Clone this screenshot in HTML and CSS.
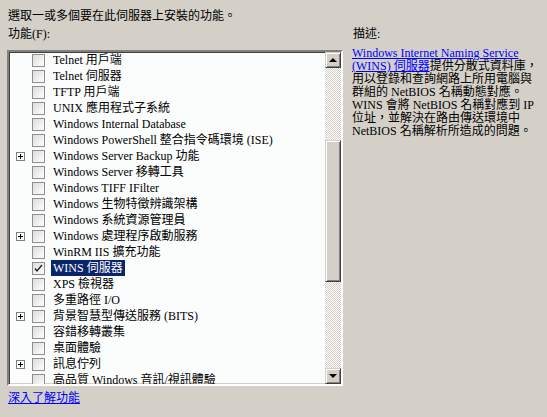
FILE: index.html
```html
<!DOCTYPE html>
<html lang="zh-Hant">
<head>
  <meta charset="UTF-8" />
  <title>新增功能</title>
  <link rel="stylesheet" href="styles.css">
</head>
<body>
  <p class="intro">選取一或多個要在此伺服器上安裝的功能。</p>

  <div class="columns">
    <div class="features">
      <div class="label">功能(F):</div>

      <div class="listbox">
        <ul class="items">
          <li class="row"><span class="exp none"></span><span class="box"></span><span class="name">Telnet 用戶端</span></li>
          <li class="row"><span class="exp none"></span><span class="box"></span><span class="name">Telnet 伺服器</span></li>
          <li class="row"><span class="exp none"></span><span class="box"></span><span class="name">TFTP 用戶端</span></li>
          <li class="row"><span class="exp none"></span><span class="box"></span><span class="name">UNIX 應用程式子系統</span></li>
          <li class="row"><span class="exp none"></span><span class="box"></span><span class="name">Windows Internal Database</span></li>
          <li class="row"><span class="exp none"></span><span class="box"></span><span class="name">Windows PowerShell 整合指令碼環境 (ISE)</span></li>
          <li class="row"><span class="exp"></span><span class="box"></span><span class="name">Windows Server Backup 功能</span></li>
          <li class="row"><span class="exp none"></span><span class="box"></span><span class="name">Windows Server 移轉工具</span></li>
          <li class="row"><span class="exp none"></span><span class="box"></span><span class="name">Windows TIFF IFilter</span></li>
          <li class="row"><span class="exp none"></span><span class="box"></span><span class="name">Windows 生物特徵辨識架構</span></li>
          <li class="row"><span class="exp none"></span><span class="box"></span><span class="name">Windows 系統資源管理員</span></li>
          <li class="row"><span class="exp"></span><span class="box"></span><span class="name">Windows 處理程序啟動服務</span></li>
          <li class="row"><span class="exp none"></span><span class="box"></span><span class="name">WinRM IIS 擴充功能</span></li>
          <li class="row"><span class="exp none"></span><span class="box checked"></span><span class="name selected">WINS 伺服器</span></li>
          <li class="row"><span class="exp none"></span><span class="box"></span><span class="name">XPS 檢視器</span></li>
          <li class="row"><span class="exp none"></span><span class="box"></span><span class="name">多重路徑 I/O</span></li>
          <li class="row"><span class="exp"></span><span class="box"></span><span class="name">背景智慧型傳送服務 (BITS)</span></li>
          <li class="row"><span class="exp none"></span><span class="box"></span><span class="name">容錯移轉叢集</span></li>
          <li class="row"><span class="exp none"></span><span class="box"></span><span class="name">桌面體驗</span></li>
          <li class="row"><span class="exp"></span><span class="box"></span><span class="name">訊息佇列</span></li>
          <li class="row"><span class="exp none"></span><span class="box"></span><span class="name">高品質 Windows 音訊/視訊體驗</span></li>
        </ul>

        <div class="scrollbar">
          <div class="btn up"></div>
          <div class="track">
            <div class="thumb"></div>
          </div>
          <div class="btn down"></div>
        </div>
      </div>

      <a class="more" href="#">深入了解功能</a>
    </div>

    <div class="desc">
      <div class="label">描述:</div>
      <p class="text"><a href="#">Windows Internet Naming Service<br>(WINS) 伺服器</a>提供分散式資料庫，<br>用以登錄和查詢網路上所用電腦與<br>群組的 NetBIOS 名稱動態對應。<br>WINS 會將 NetBIOS 名稱對應到 IP<br>位址，並解決在路由傳送環境中<br>NetBIOS 名稱解析所造成的問題。</p>
    </div>
  </div>
</body>
</html>
```

FILE: styles.css
```css
body {
  margin: 0;
  background: #d4d0c8;
  color: #000;
  font-family: "Liberation Serif", "Noto Sans CJK TC", serif;
  font-size: 12px;
  line-height: 13px;
}

.intro {
  margin: 10px 0 0 8px;
}

.columns {
  display: flex;
  margin-top: 5px;
}

.features {
  width: 336px;
  margin-left: 7px;
}

.label {
  margin-left: 1px;
  margin-bottom: 9px;
}

.listbox {
  display: flex;
  height: 332px;
  border: 2px solid;
  border-color: #808080 #fff #fff #808080;
  box-shadow: inset 1px 1px 0 #404040, inset -1px -1px 0 #d4d0c8;
  background: #fbfdfc;
}

.items {
  flex: 1;
  list-style: none;
  margin: 0;
  padding: 0;
  overflow: hidden;
}

.row {
  display: flex;
  align-items: center;
  height: 16px;
  line-height: 16px;
  white-space: nowrap;
}

.exp {
  width: 9px;
  height: 9px;
  margin-left: 7px;
  box-sizing: border-box;
  border: 1px solid #808080;
  background:
    linear-gradient(#000, #000) 1px 3px / 5px 1px no-repeat,
    linear-gradient(#000, #000) 3px 1px / 1px 5px no-repeat,
    #fff;
}

.exp.none {
  visibility: hidden;
}

.box {
  width: 13px;
  height: 13px;
  margin-left: 7px;
  box-sizing: border-box;
  border: 1px solid #8e8f8f;
  background: linear-gradient(135deg, #dcdcd8, #fff);
}

.box.checked {
  background:
    url("data:image/svg+xml,%3Csvg xmlns='http://www.w3.org/2000/svg' width='11' height='11'%3E%3Cpath d='M2 5.5l2 2.5 5-6' fill='none' stroke='%23222' stroke-width='1.4'/%3E%3C/svg%3E") center no-repeat,
    linear-gradient(135deg, #dcdcd8, #fff);
}

.name {
  margin-left: 6px;
  padding: 0 2px;
}

.name.selected {
  background: #0a246a;
  color: #fff;
}

.scrollbar {
  display: flex;
  flex-direction: column;
  width: 16px;
}

.btn {
  height: 16px;
  box-sizing: border-box;
  background: #d4d0c8;
  border: 1px solid;
  border-color: #d4d0c8 #404040 #404040 #d4d0c8;
  box-shadow: inset 1px 1px 0 #fff, inset -1px -1px 0 #808080;
  display: flex;
  align-items: center;
  justify-content: center;
}

.btn::before {
  content: "";
  border-left: 4px solid transparent;
  border-right: 4px solid transparent;
}

.btn.up::before {
  border-bottom: 4px solid #000;
}

.btn.down::before {
  border-top: 4px solid #000;
}

.track {
  flex: 1;
  background: repeating-conic-gradient(#d4d0c8 0 25%, #fff 0 50%) 0 0 / 2px 2px;
}

.thumb {
  margin-top: 72px;
  height: 142px;
  box-sizing: border-box;
  background: #d4d0c8;
  border: 1px solid;
  border-color: #d4d0c8 #404040 #404040 #d4d0c8;
  box-shadow: inset 1px 1px 0 #fff, inset -1px -1px 0 #808080;
}

.more {
  display: inline-block;
  margin: 6px 0 0 1px;
  color: #0000ff;
}

.desc {
  margin-left: 9px;
}

.desc .label {
  margin-bottom: 6px;
}

.desc .text {
  margin: 0;
  white-space: nowrap;
}

.desc a {
  color: #0000ff;
}
```
